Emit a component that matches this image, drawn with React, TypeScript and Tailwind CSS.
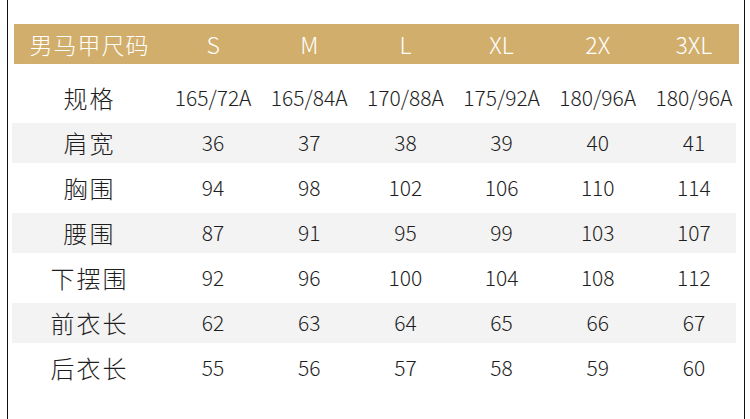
const sizes = ["S", "M", "L", "XL", "2X", "3XL"];

const rows: { label: string; values: string[]; shaded: boolean }[] = [
  { label: "肩宽", values: ["36", "37", "38", "39", "40", "41"], shaded: true },
  { label: "胸围", values: ["94", "98", "102", "106", "110", "114"], shaded: false },
  { label: "腰围", values: ["87", "91", "95", "99", "103", "107"], shaded: true },
  { label: "下摆围", values: ["92", "96", "100", "104", "108", "112"], shaded: false },
  { label: "前衣长", values: ["62", "63", "64", "65", "66", "67"], shaded: true },
  { label: "后衣长", values: ["55", "56", "57", "58", "59", "60"], shaded: false },
];

const specs = ["165/72A", "165/84A", "170/88A", "175/92A", "180/96A", "180/96A"];

const font = { fontFamily: '"Noto Sans CJK SC", "Noto Sans", sans-serif' };

function Row({ label, values }: { label: string; values: string[] }) {
  return (
    <div className="ml-[2px] grid h-full w-[728px] grid-cols-[151px_repeat(6,1fr)] items-center text-[#1e1e1e]">
      <span className="text-center text-[24px] tracking-[2px] font-light">{label}</span>
      {values.map((v, i) => (
        <span key={i} className="text-center text-[21px] font-light">
          {v}
        </span>
      ))}
    </div>
  );
}

export default function App() {
  return (
    <div className="h-[419px] w-[750px] overflow-hidden bg-white pl-[7px]" style={font}>
      <div className="h-full w-[738px] border-x border-[#111] pt-[24px]">
        {/* header band */}
        <div className="ml-[6px] h-[40px] w-[725px] overflow-hidden bg-[#d1ae6b]">
          <div className="grid h-full w-[728px] grid-cols-[151px_repeat(6,1fr)] items-center text-white">
            <span className="text-center text-[23px] tracking-[1px] font-light">男马甲尺码</span>
            {sizes.map((s) => (
              <span key={s} className="text-center text-[23px] font-light">
                {s}
              </span>
            ))}
          </div>
        </div>

        <div className="ml-[4px] mt-[11px] mb-[2px] h-[46px] w-[724px]">
          <Row label="规格" values={specs} />
        </div>

        {rows.map((r) => (
          <div
            key={r.label}
            className={
              r.shaded
                ? "ml-[4px] h-[40px] w-[724px] bg-[#f3f3f3]"
                : "ml-[4px] h-[50px] w-[724px]"
            }
          >
            <Row label={r.label} values={r.values} />
          </div>
        ))}
      </div>
    </div>
  );
}
